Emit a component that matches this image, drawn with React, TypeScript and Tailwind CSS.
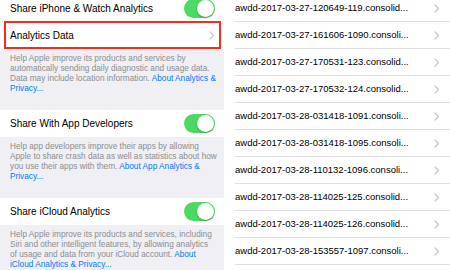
const FONT = { fontFamily: '"Liberation Sans", Arial, sans-serif' };

const FILES = [
  "awdd-2017-03-27-120649-119.consolid...",
  "awdd-2017-03-27-161606-1090.consoli...",
  "awdd-2017-03-27-170531-123.consolid...",
  "awdd-2017-03-27-170532-124.consolid...",
  "awdd-2017-03-28-031418-1091.consoli...",
  "awdd-2017-03-28-031418-1095.consoli...",
  "awdd-2017-03-28-110132-1096.consoli...",
  "awdd-2017-03-28-114025-125.consolid...",
  "awdd-2017-03-28-114025-126.consolid...",
  "awdd-2017-03-28-153557-1097.consoli...",
  "",
];

function Chevron() {
  return (
    <svg width="6" height="9" viewBox="0 0 6 9" fill="none" stroke="#c7c7cc" strokeWidth="1.2" strokeLinecap="round" strokeLinejoin="round">
      <path d="M1 1l3.5 3.5L1 8" />
    </svg>
  );
}

function Toggle() {
  return (
    <div className="flex h-[19px] w-[31px] items-center justify-end rounded-full bg-[#4cd964] pr-[1px]">
      <div className="h-[17px] w-[17px] rounded-full bg-white shadow-[0_1px_2px_rgba(0,0,0,0.3)]" />
    </div>
  );
}

function SwitchRow({ label, className = "" }: { label: string; className?: string }) {
  return (
    <div className={`flex h-[27px] items-center justify-between bg-white pl-[10px] pr-[9px] ${className}`}>
      <span className="text-[10px] text-black">{label}</span>
      <Toggle />
    </div>
  );
}

function Footer({ lines }: { lines: { text?: string; link?: string }[] }) {
  return (
    <div className="pb-[16px] pl-[10px] pt-[5px] text-[8.25px] leading-[10px] text-[#8e8e93]">
      {lines.map((l, i) => (
        <div key={i} className="whitespace-nowrap">
          {l.text}
          {l.link && <span className="text-[#007aff]">{l.link}</span>}
        </div>
      ))}
    </div>
  );
}

export default function App() {
  return (
    <div className="flex h-[270px] w-[450px] overflow-hidden bg-white" style={FONT}>
      <div className="w-[224px] shrink-0 bg-[#efeff4]">
        <SwitchRow label="Share iPhone & Watch Analytics" className="-mt-[5px]" />
        <div className="relative flex h-[27px] items-center justify-between bg-white pl-[10px] pr-[9px]">
          <span className="text-[10px] text-black">Analytics Data</span>
          <Chevron />
          <div className="absolute -top-[1px] bottom-0 left-[4px] right-[3px] border-2 border-[#fb2a19]" />
        </div>
        <Footer
          lines={[
            { text: "Help Apple improve its products and services by" },
            { text: "automatically sending daily diagnostic and usage data." },
            { text: "Data may include location information. ", link: "About Analytics &" },
            { link: "Privacy..." },
          ]}
        />
        <SwitchRow label="Share With App Developers" />
        <Footer
          lines={[
            { text: "Help app developers improve their apps by allowing" },
            { text: "Apple to share crash data as well as statistics about how" },
            { text: "you use their apps with them. ", link: "About App Analytics &" },
            { link: "Privacy..." },
          ]}
        />
        <SwitchRow label="Share iCloud Analytics" />
        <Footer
          lines={[
            { text: "Help Apple improve its products and services, including" },
            { text: "Siri and other intelligent features, by allowing analytics" },
            { text: "of usage and data from your iCloud account. ", link: "About" },
            { link: "iCloud Analytics & Privacy..." },
          ]}
        />
      </div>
      <div className="flex-1 pl-[11px]">
        <div className="-mt-[5px]">
          {FILES.map((f, i) => (
            <div key={i} className="flex h-[27px] items-center justify-between border-b border-[#e0e0e4] pr-[10px]">
              <span className="whitespace-nowrap text-[9.5px] text-black">{f}</span>
              {f && <Chevron />}
            </div>
          ))}
        </div>
      </div>
    </div>
  );
}
